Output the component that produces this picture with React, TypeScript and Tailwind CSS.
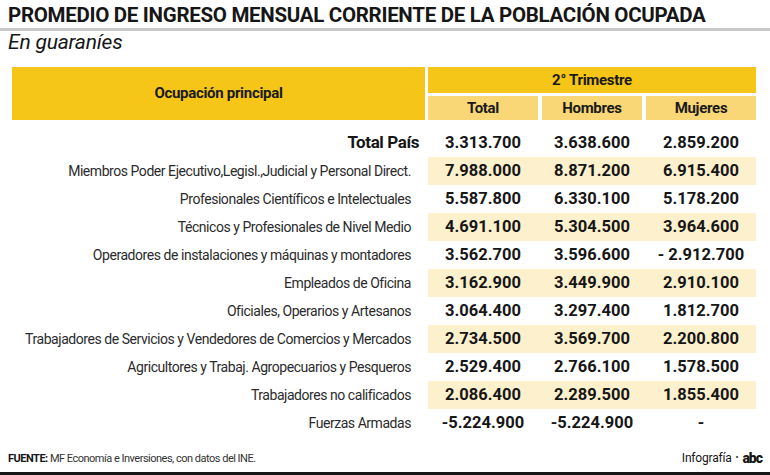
const rows = [
  { label: "Miembros Poder Ejecutivo,Legisl.,Judicial y Personal Direct.", v: ["7.988.000", "8.871.200", "6.915.400"], hl: true },
  { label: "Profesionales Científicos e Intelectuales", v: ["5.587.800", "6.330.100", "5.178.200"] },
  { label: "Técnicos y Profesionales de Nivel Medio", v: ["4.691.100", "5.304.500", "3.964.600"], hl: true },
  { label: "Operadores de instalaciones y máquinas y montadores", v: ["3.562.700", "3.596.600", "- 2.912.700"] },
  { label: "Empleados de Oficina", v: ["3.162.900", "3.449.900", "2.910.100"], hl: true },
  { label: "Oficiales, Operarios y Artesanos", v: ["3.064.400", "3.297.400", "1.812.700"] },
  { label: "Trabajadores de Servicios y Vendedores de Comercios y Mercados", v: ["2.734.500", "3.569.700", "2.200.800"], hl: true },
  { label: "Agricultores y Trabaj. Agropecuarios y Pesqueros", v: ["2.529.400", "2.766.100", "1.578.500"] },
  { label: "Trabajadores no calificados", v: ["2.086.400", "2.289.500", "1.855.400"], hl: true },
  { label: "Fuerzas Armadas", v: ["-5.224.900", "-5.224.900", "-"] },
];

const font = { fontFamily: 'Roboto, "Liberation Sans", sans-serif' };

function Row({ label, v, hl, total }: { label: string; v: string[]; hl?: boolean; total?: boolean }) {
  return (
    <div className="flex h-[28px] items-center">
      <div
        className={
          "w-[413px] whitespace-nowrap text-right " +
          (total
            ? "pr-[6px] text-[17px] font-bold tracking-[-0.4px] text-[#161616]"
            : "pr-[14px] text-[14px] tracking-[-0.45px] text-[#2b2b2b]")
        }
      >
        {label}
      </div>
      <div
        className={
          "ml-[3px] grid h-full w-[328px] grid-cols-[110px_100px_110px] items-center gap-x-[4px] " +
          (hl ? "bg-[#fdf0cd]" : "")
        }
      >
        {v.map((x, i) => (
          <div key={i} className="whitespace-nowrap text-center text-[16.5px] font-bold text-[#161616]">
            {x}
          </div>
        ))}
      </div>
    </div>
  );
}

export default function App() {
  return (
    <div className="relative h-[475px] w-[770px] overflow-hidden bg-white" style={font}>
      {/* TITLE */}
      <div className="whitespace-nowrap px-[8px] pt-[2px] text-[20.5px] font-bold leading-[26px] tracking-[-0.3px] text-[#161616]">
        PROMEDIO DE INGRESO MENSUAL CORRIENTE DE LA POBLACIÓN OCUPADA
      </div>
      <div className="h-[3px] w-full bg-[#c9c9cb]" />
      <div className="px-[8px] text-[21px] italic leading-[22px] tracking-[-0.2px] text-[#161616]">En guaraníes</div>

      {/* TABLE */}
      <div className="ml-[12px] mt-[14px]">
        <div className="flex h-[53px]">
          <div className="flex w-[413px] items-center justify-center bg-[#f5c518] text-[15px] font-bold tracking-[-0.3px] text-[#1a1a1a]">
            Ocupación principal
          </div>
          <div className="ml-[3px] flex w-[328px] flex-col gap-[3px]">
            <div className="flex h-[26px] items-center justify-center bg-[#f5c518] text-[15px] font-bold tracking-[-0.3px] text-[#1a1a1a]">
              2° Trimestre
            </div>
            <div className="grid flex-1 grid-cols-[110px_100px_110px] gap-x-[4px]">
              {["Total", "Hombres", "Mujeres"].map((h) => (
                <div
                  key={h}
                  className="flex items-center justify-center bg-[#f9d776] text-[15px] font-bold tracking-[-0.3px] text-[#1a1a1a]"
                >
                  {h}
                </div>
              ))}
            </div>
          </div>
        </div>

        <div className="mt-[9px]">
          <Row label="Total País" v={["3.313.700", "3.638.600", "2.859.200"]} total />
          {rows.map((r) => (
            <Row key={r.label} {...r} />
          ))}
        </div>
      </div>

      {/* FOOTER */}
      <div className="absolute bottom-[3px] left-0 right-0 flex items-end justify-between px-[8px] pb-[5px]">
        <div className="whitespace-nowrap text-[11px] tracking-[-0.5px] text-[#333]">
          <span className="font-bold text-[#161616]">FUENTE:</span> MF Economía e Inversiones, con datos del INE.
        </div>
        <div className="flex items-center gap-[4px] whitespace-nowrap text-[12px] tracking-[-0.2px] text-[#161616]">
          <span>Infografía</span>
          <span className="text-[9px]">•</span>
          <span className="text-[14px] font-black leading-none tracking-[-1px]">abc</span>
        </div>
      </div>
      <div className="absolute bottom-0 left-0 h-[3px] w-full bg-[#161616]" />
    </div>
  );
}
